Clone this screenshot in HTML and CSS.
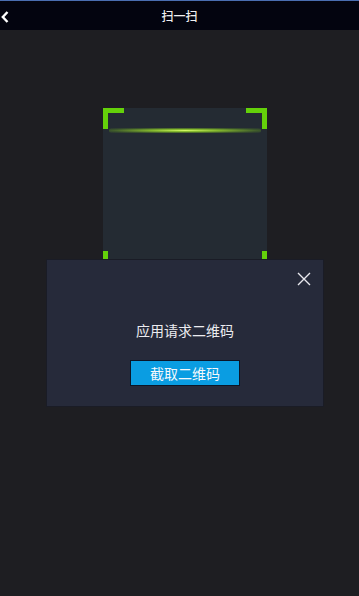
FILE: index.html
```html
<!DOCTYPE html>
<html>
<head>
<meta charset="utf-8">
<link rel="stylesheet" href="styles.css">
</head>
<body>
<div class="topline"></div>
<header class="bar">
  <svg class="back" width="8" height="12" viewBox="0 0 8 12"><path d="M6.5 1 L1.8 6 L6.5 11" fill="none" stroke="#fff" stroke-width="2.4"/></svg>
  <div class="title">扫一扫</div>
</header>
<main class="stage">
  <div class="scan">
    <span class="c tl"></span><span class="c tr"></span><span class="c bl"></span><span class="c br"></span>
    <div class="line"></div>
  </div>
  <div class="dialog">
    <svg class="close" width="14" height="14" viewBox="0 0 14 14"><path d="M1 1 L13 13 M13 1 L1 13" stroke="#e8e8ee" stroke-width="1.4"/></svg>
    <div class="msg">应用请求二维码</div>
    <button class="btn">截取二维码</button>
  </div>
</main>
</body>
</html>
```
FILE: styles.css
```css
html, body { margin: 0; padding: 0; }
body {
  width: 359px; height: 596px; overflow: hidden;
  background: #1e1e22;
  font-family: "Noto Sans CJK SC", "Noto Sans", sans-serif;
  position: relative;
}
.topline { height: 1px; background: #4a6eb0; }
.bar {
  height: 29px; background: #03040f;
  position: relative; display: flex; align-items: center; justify-content: center;
}
.back { position: absolute; left: 1px; top: 10px; }
.title { color: #f0f0f0; font-size: 12px; line-height: 29px; font-weight: 500; }
.stage { position: relative; height: 566px; }
.scan {
  position: absolute; left: 103px; top: 78px; width: 164px; height: 164px;
  background: #242b33;
}
.c { position: absolute; width: 16px; height: 16px; border-color: #64d10a; border-style: solid; border-width: 0; }
.tl { left: 0; top: 0; border-top-width: 5px; border-left-width: 5px; }
.tr { right: 0; top: 0; border-top-width: 5px; border-right-width: 5px; }
.bl { left: 0; bottom: 0; border-bottom-width: 5px; border-left-width: 5px; }
.br { right: 0; bottom: 0; border-bottom-width: 5px; border-right-width: 5px; }
.line {
  position: absolute; left: 6px; right: 6px; top: 20px; height: 5px;
  background: radial-gradient(ellipse at center, rgba(210,250,100,1) 0%, rgba(150,210,45,0.85) 30%, rgba(100,160,30,0.35) 70%, rgba(80,120,30,0) 100%);
  border-radius: 3px;
}
.dialog {
  position: absolute; left: 46px; top: 229px; width: 276px; height: 146px;
  background: #262a3a; border: 1px solid #1a1c26;
  display: flex; flex-direction: column; align-items: center;
}
.close { position: absolute; right: 12px; top: 12px; }
.msg { margin-top: 61px; color: #ececf0; font-size: 14px; line-height: 18px; }
.btn {
  margin-top: 21px; width: 110px; height: 26px;
  background: #0a9de2; border: 1px solid #0b1628; color: #f4f8fc;
  font-family: inherit; font-size: 14px; padding: 0; line-height: 22px;
}
```
